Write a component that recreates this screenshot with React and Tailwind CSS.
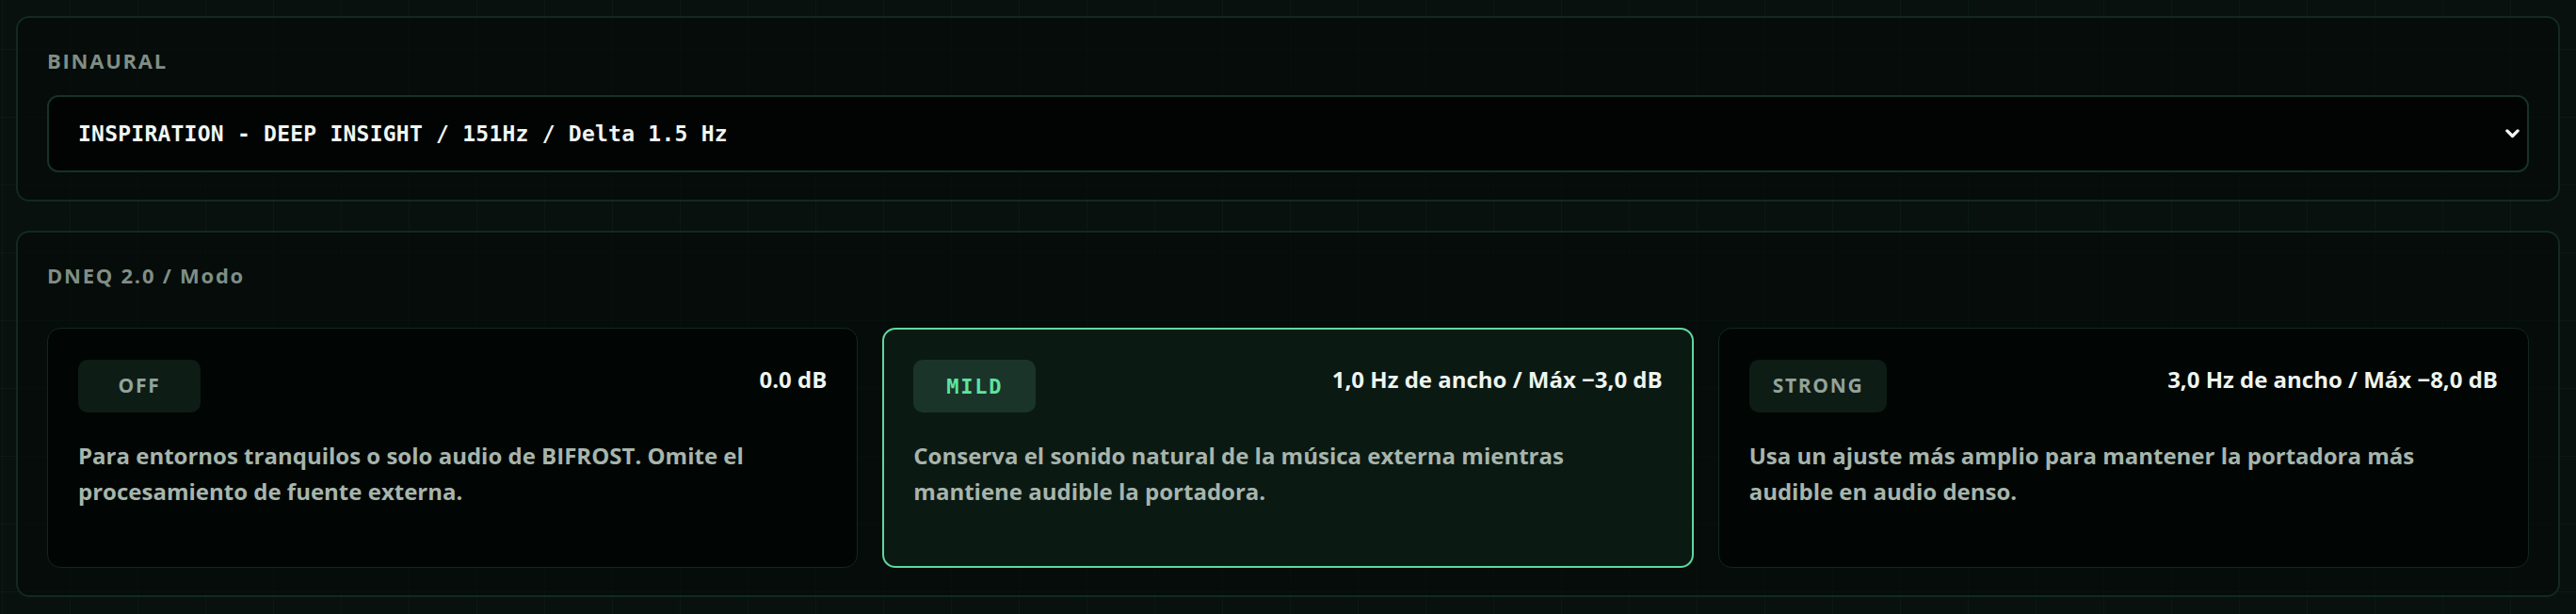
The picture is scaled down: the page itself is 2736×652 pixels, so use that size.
import { useState } from 'react'
import clsx from 'clsx'

const presets = [
  'INSPIRATION - DEEP INSIGHT / 151Hz / Delta 1.5 Hz',
  'FOCUS - CLEAR MIND / 136Hz / Alpha 10 Hz',
  'RELAX - CALM WAVES / 120Hz / Theta 6 Hz',
]

const modes = [
  {
    id: 'off',
    label: 'OFF',
    metric: '0.0 dB',
    desc: 'Para entornos tranquilos o solo audio de BIFROST. Omite el procesamiento de fuente externa.',
  },
  {
    id: 'mild',
    label: 'MILD',
    metric: '1,0 Hz de ancho / Máx −3,0 dB',
    desc: 'Conserva el sonido natural de la música externa mientras mantiene audible la portadora.',
  },
  {
    id: 'strong',
    label: 'STRONG',
    metric: '3,0 Hz de ancho / Máx −8,0 dB',
    desc: 'Usa un ajuste más amplio para mantener la portadora más audible en audio denso.',
  },
]

const mono = "font-['DejaVu_Sans_Mono','Liberation_Mono',monospace]"

function Panel({ title, children }) {
  return (
    <section className="rounded-[14px] border-2 border-[#13291f] bg-[#030a07]/60 px-[31px] pb-[29px] pt-[29px]">
      <h2 className="text-[22px] font-bold leading-[33px] tracking-[0.08em] text-[#7f8e86]">{title}</h2>
      {children}
    </section>
  )
}

export default function App() {
  const [preset, setPreset] = useState(presets[0])
  const [mode, setMode] = useState('mild')

  return (
    <div className="flex min-h-[652px] w-full flex-col gap-[31px] bg-[#08110d] bg-[linear-gradient(to_right,rgba(70,140,105,0.07)_1px,transparent_1px),linear-gradient(to_bottom,rgba(70,140,105,0.07)_1px,transparent_1px)] bg-[size:72px_72px] bg-[position:2px_52px] px-[17px] py-[17px] font-['Open_Sans','Lato',sans-serif]">
      <Panel title="BINAURAL">
        <div className="relative mt-[20px]">
          <select
            value={preset}
            onChange={(e) => setPreset(e.target.value)}
            className={clsx(
              mono,
              'h-[82px] w-full appearance-none rounded-[12px] border-2 border-[#163226] bg-[#010403] pl-[31px] pr-[60px] text-[23px] font-bold tracking-[0.01em] text-[#f1f6f2] outline-none'
            )}
          >
            {presets.map((p) => (
              <option key={p} value={p}>{p}</option>
            ))}
          </select>
          <svg
            viewBox="0 0 12 8"
            className="pointer-events-none absolute right-[10px] top-1/2 h-[10px] w-[15px] -translate-y-1/2"
            fill="none"
            stroke="#f1f6f2"
            strokeWidth="2.6"
            strokeLinecap="round"
            strokeLinejoin="round"
          >
            <path d="M1.5 1.5 6 6l4.5-4.5" />
          </svg>
        </div>
      </Panel>

      <Panel title="DNEQ 2.0 / Modo">
        <div className="mt-[39px] grid grid-cols-3 gap-[26px]">
          {modes.map((m) => {
            const active = m.id === mode
            return (
              <button
                key={m.id}
                onClick={() => setMode(m.id)}
                className={clsx(
                  'flex h-[255px] flex-col rounded-[14px] text-left',
                  active
                    ? 'border-2 border-[#5fd89f] bg-[#0b1913] px-[31px] pt-[32px]'
                    : 'border border-[#13271e] bg-[#010504]/90 px-[32px] pt-[33px]'
                )}
              >
                <div className="flex items-start justify-between gap-4">
                  <span
                    className={clsx(
                      'flex h-[56px] min-w-[130px] items-center justify-center rounded-[10px] px-[25px] font-bold',
                      active
                        ? clsx(mono, 'bg-[#1a3429] text-[22px] tracking-[0.08em] text-[#5fe2a1]')
                        : 'bg-[#0e1c16] text-[21px] tracking-[0.08em] text-[#93a39a]'
                    )}
                  >
                    {m.label}
                  </span>
                  <span className="pt-[3px] text-[24px] font-bold leading-[36px] text-[#eef5ef]">{m.metric}</span>
                </div>
                <p className="mt-[27px] max-w-[745px] text-[24px] font-bold leading-[38px] text-[#a7b5ac]">{m.desc}</p>
              </button>
            )
          })}
        </div>
      </Panel>
    </div>
  )
}
